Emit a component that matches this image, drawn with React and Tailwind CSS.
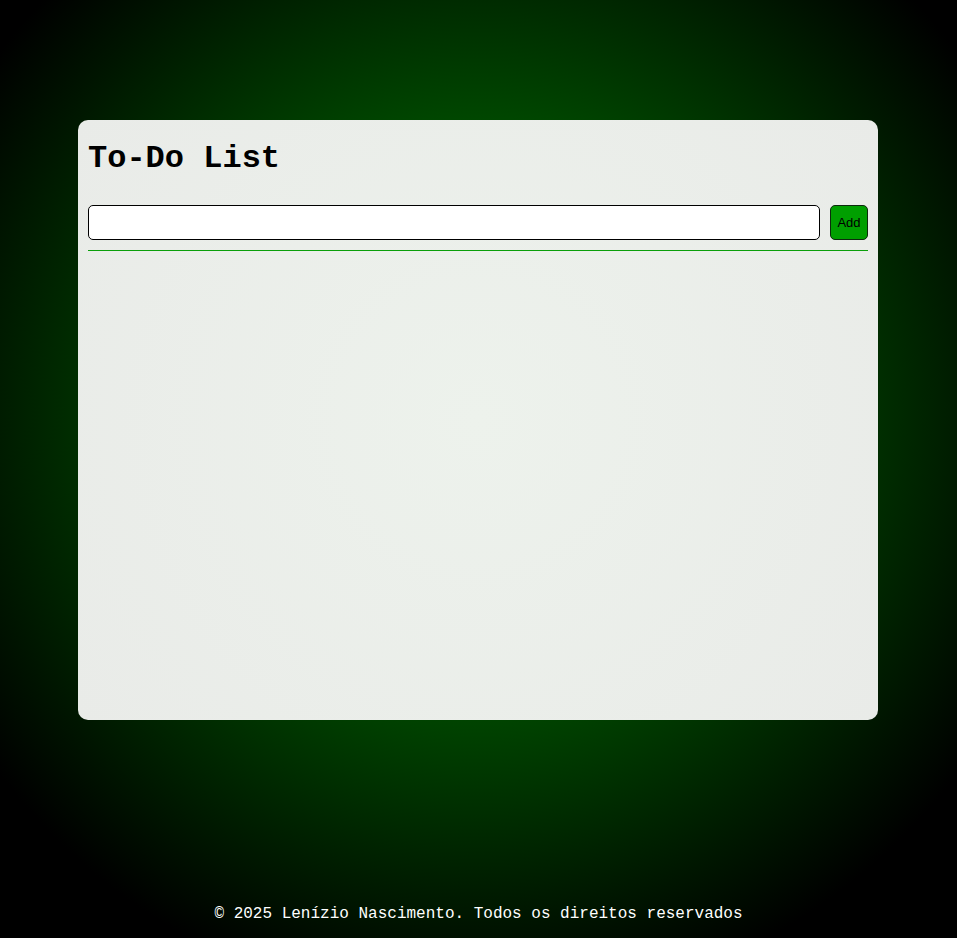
import React, { useState } from 'react';

const App = () => {
  const [text, setText] = useState('');
  const [todos, setTodos] = useState([]);

  const handleAdd = () => {
    if (!text.trim()) return;
    setTodos(prev => [...prev, text.trim()]);
    setText('');
  };

  return (
    <div
      className="min-h-screen w-full flex flex-col font-['Courier_New','Nimbus_Mono_PS','FreeMono',Courier,'Liberation_Mono',monospace]"
      style={{ background: 'radial-gradient(circle at 50% 44%, #008a00 0px, #000 600px)' }}
    >
      <div
        className="mt-[120px] ml-[78px] w-[800px] h-[600px] rounded-[10px] pt-[21px] px-[10px]"
        style={{ background: 'radial-gradient(circle at 50% 50%, #edf2ec 0%, #e9ebe8 100%)' }}
      >
        <h1 className="m-0 text-[32px] leading-[36px] font-bold text-black">To-Do List</h1>
        <div className="mt-[28px] flex gap-[10px]">
          <input
            type="text"
            value={text}
            onChange={e => setText(e.target.value)}
            className="flex-1 h-[35px] bg-white border border-black rounded-[5px] px-2 outline-none"
          />
          <button
            onClick={handleAdd}
            className="w-[38px] h-[35px] bg-[#009f00] border border-[#0d2a0d] rounded-[5px] text-[13px] text-black font-['Liberation_Sans',Arial,sans-serif]"
          >
            Add
          </button>
        </div>
        <div className="mt-[10px] h-px bg-[#0a9f0a]" />
        <ul className="m-0 p-0 list-none">
          {todos.map((t, i) => (
            <li key={i} className="py-2 text-base text-black">{t}</li>
          ))}
        </ul>
      </div>
      <footer className="mt-[185px] text-center text-[16px] leading-[18px] text-white">
        © 2025 Lenízio Nascimento. Todos os direitos reservados
      </footer>
    </div>
  );
};

export default App;
